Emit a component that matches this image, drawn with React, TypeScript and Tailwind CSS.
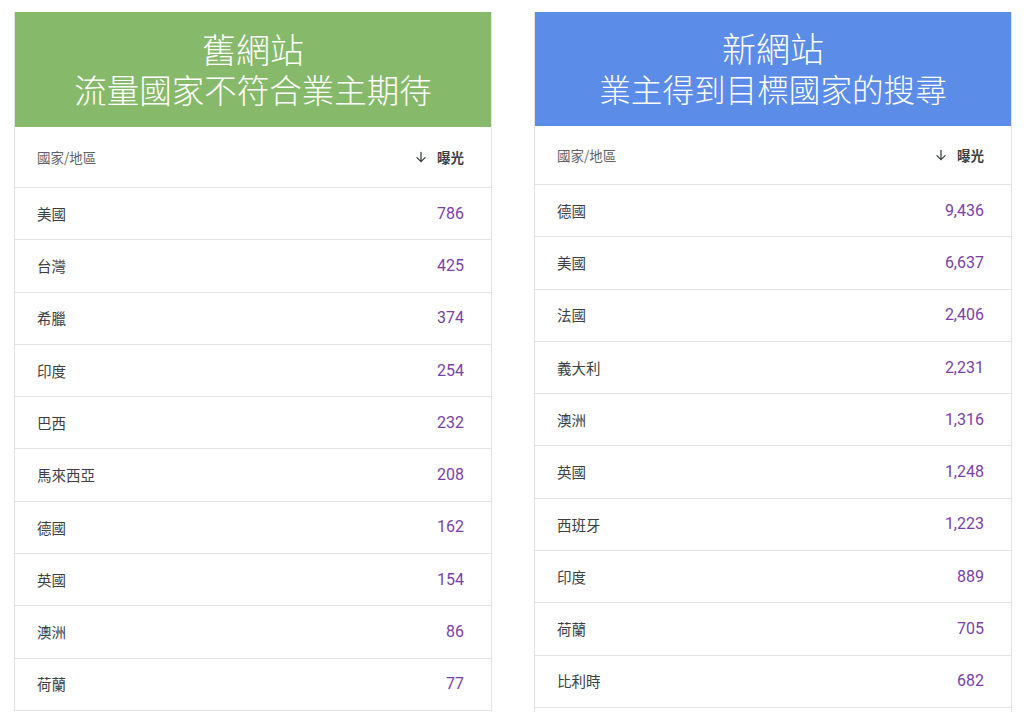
const oldRows: [string, string][] = [
  ['美國', '786'],
  ['台灣', '425'],
  ['希臘', '374'],
  ['印度', '254'],
  ['巴西', '232'],
  ['馬來西亞', '208'],
  ['德國', '162'],
  ['英國', '154'],
  ['澳洲', '86'],
  ['荷蘭', '77'],
];

const newRows: [string, string][] = [
  ['德國', '9,436'],
  ['美國', '6,637'],
  ['法國', '2,406'],
  ['義大利', '2,231'],
  ['澳洲', '1,316'],
  ['英國', '1,248'],
  ['西班牙', '1,223'],
  ['印度', '889'],
  ['荷蘭', '705'],
  ['比利時', '682'],
];

const cjk = { fontFamily: '"Noto Sans CJK TC", "Noto Sans", sans-serif' };
const num = { fontFamily: 'Roboto, "Noto Sans", sans-serif' };

const IconArrowDown = () => (
  <svg width="14" height="14" viewBox="0 0 24 24" fill="none" stroke="currentColor" strokeWidth="2.2" strokeLinecap="round" strokeLinejoin="round">
    <path d="M12 4v16M5 13l7 7 7-7" />
  </svg>
);

function Panel({
  color,
  title,
  subtitle,
  rows,
  headerH,
  labelH,
  tail,
  subSize,
}: {
  color: string;
  title: string;
  subtitle: string;
  rows: [string, string][];
  headerH: string;
  labelH: string;
  tail?: boolean;
  subSize: string;
}) {
  return (
    <div className="w-[478px] flex flex-col border-x border-[#e3e3e3] bg-white">
      <div className={`${color} ${headerH} flex flex-col items-center justify-center text-white font-light pb-[2px]`} style={cjk}>
        <div className="h-[42px] flex items-center text-[34px] leading-none">{title}</div>
        <div className={`h-[40px] flex items-center leading-none ${subSize}`}>{subtitle}</div>
      </div>
      <div className={`${labelH} flex items-center justify-between pl-[22px] pr-[27px] border-b border-[#e3e3e3]`} style={cjk}>
        <span className="text-[13.5px] text-[#5f6368]">國家/地區</span>
        <span className="flex items-center gap-[9px] text-[13.5px] font-bold text-[#3c4043]">
          <IconArrowDown />
          曝光
        </span>
      </div>
      {rows.map(([name, value]) => (
        <div key={name} className="h-[52.3px] flex items-center justify-between pl-[22px] pr-[27px] border-b border-[#e3e3e3]">
          <span className="text-[14.5px] text-[#3c4043]" style={cjk}>{name}</span>
          <span className="text-[16px] text-[#7b3fa8]" style={num}>{value}</span>
        </div>
      ))}
      {tail && <div className="h-[4px]" />}
    </div>
  );
}

export default function App() {
  return (
    <div className="w-[1024px] h-[723px] bg-white flex items-start gap-[42px] pl-[14px] pt-[12px]">
      <Panel
        color="bg-[#86ba6a]"
        title="舊網站"
        subtitle="流量國家不符合業主期待"
        rows={oldRows}
        headerH="h-[115px]"
        labelH="h-[61px]"
        subSize="text-[32.5px]"
      />
      <Panel
        color="bg-[#5b8ce8]"
        title="新網站"
        subtitle="業主得到目標國家的搜尋"
        rows={newRows}
        headerH="h-[114px]"
        labelH="h-[59px]"
        tail
        subSize="text-[31.6px]"
      />
    </div>
  );
}
